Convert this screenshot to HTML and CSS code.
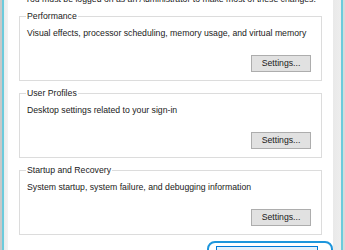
FILE: index.html
```html
<!DOCTYPE html>
<html lang="en">
<head>
  <meta charset="UTF-8" />
  <title>System Properties - Advanced</title>
  <link rel="stylesheet" href="styles.css">
</head>
<body>
  <div class="window">
    <div class="frame-left"></div>
    <div class="dialog">
      <p class="note">You must be logged on as an Administrator to make most of these changes.</p>

      <fieldset class="group">
        <legend>Performance</legend>
        <p class="desc">Visual effects, processor scheduling, memory usage, and virtual memory</p>
        <div class="actions"><button class="btn">Settings...</button></div>
      </fieldset>

      <fieldset class="group">
        <legend>User Profiles</legend>
        <p class="desc">Desktop settings related to your sign-in</p>
        <div class="actions"><button class="btn">Settings...</button></div>
      </fieldset>

      <fieldset class="group">
        <legend>Startup and Recovery</legend>
        <p class="desc">System startup, system failure, and debugging information</p>
        <div class="actions"><button class="btn">Settings...</button></div>
      </fieldset>

      <div class="bottom">
        <div class="ring"><button class="btn btn-env">Environment Variables...</button></div>
      </div>
    </div>
    <div class="frame-right"></div>
  </div>
</body>
</html>
```

FILE: styles.css
```css
html, body {
  margin: 0;
  padding: 0;
  height: 100%;
  overflow: hidden;
}
body {
  font-family: "Liberation Sans", Arial, sans-serif;
  font-size: 8.7px;
  color: #1a1a1a;
  background: #fff;
}
.window {
  display: flex;
  height: 250px;
  overflow: hidden;
}
.frame-left {
  flex: none;
  width: 8px;
  background: linear-gradient(to right, #c9c9c9 0, #c9c9c9 2px, #6ccbdc 2px, #6ccbdc 4px, #ececec 4px, #f2f2f2 8px);
}
.frame-right {
  flex: none;
  width: 12px;
  background: linear-gradient(to right, #e9e9e9 0, #ededed 8px, #6ccbdc 8px, #6ccbdc 10px, #d9d9d9 10px);
}
.dialog {
  flex: 1;
  min-width: 0;
  background: #fff;
  padding: 0 11px;
}
.note {
  margin: -6px 0 0 6px;
  line-height: 11px;
  white-space: nowrap;
  overflow: hidden;
}
.group {
  border: 1px solid #dcdcdc;
  margin: 0;
  padding: 0 10px 8px 6px;
  min-width: 0;
}
.note + .group { margin-top: 5px; }
.group + .group { margin-top: 6px; }
.group legend {
  padding: 0 1px;
  line-height: 12px;
}
.desc {
  margin: 6px 0 0 1px;
  line-height: 11px;
  white-space: nowrap;
}
.actions {
  display: flex;
  justify-content: flex-end;
  margin-top: 16px;
}
.btn {
  font-family: inherit;
  font-size: 8.7px;
  color: #1a1a1a;
  background: #e1e1e1;
  border: 1px solid #adadad;
  width: 60px;
  height: 17px;
  padding: 0;
  line-height: 15px;
  white-space: nowrap;
}
.bottom {
  display: flex;
  justify-content: flex-end;
  margin-top: 6px;
  margin-right: -11px;
}
.ring {
  border: 2px solid #1e96dc;
  border-radius: 8px;
  padding: 3px 13px 0 7px;
  width: 102px;
  height: 20px;
}
.btn-env {
  width: 102px;
  height: 22px;
  border: 1px solid #0078d7;
  background: #e5f1fb;
}
```
